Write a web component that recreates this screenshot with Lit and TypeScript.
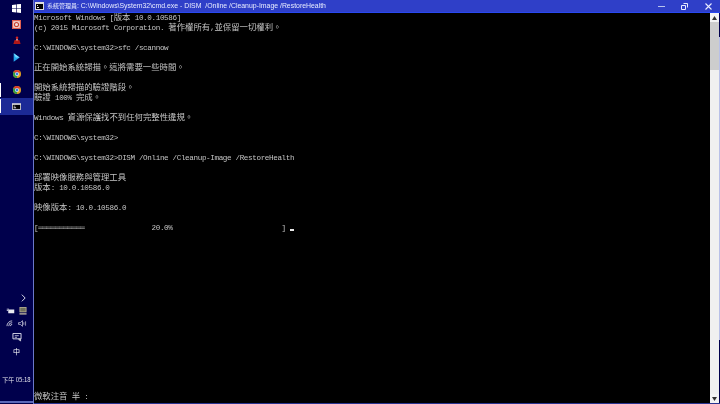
import { LitElement, html, css, svg } from "lit";
import { customElement } from "lit/decorators.js";

const P = "C:\\WINDOWS\\system32>";
const lines = [
  "Microsoft Windows [版本 10.0.10586]",
  "(c) 2015 Microsoft Corporation. 著作權所有,並保留一切權利。",
  "",
  P + "sfc /scannow",
  "",
  "正在開始系統掃描。這將需要一些時間。",
  "",
  "開始系統掃描的驗證階段。",
  "驗證 100% 完成。",
  "",
  "Windows 資源保護找不到任何完整性違規。",
  "",
  P,
  "",
  P + "DISM /Online /Cleanup-Image /RestoreHealth",
  "",
  "部署映像服務與管理工具",
  "版本: 10.0.10586.0",
  "",
  "映像版本: 10.0.10586.0",
  "",
];

/* Console cells: wide characters sit in a span that fills exactly two cells. */
const cells = (text: string) =>
  text.split(/([^\x00-\x7f]+)/).map((part, i) =>
    i % 2 ? html`<span class="cjk">${part}</span>` : part
  );

const chrome = (x: number, y: number) => svg`
  <g transform="translate(${x} ${y})">
    <circle cx="5" cy="5" r="5" fill="#e0a020"/>
    <path d="M5 5 L0.7 2.5 A5 5 0 0 1 9.3 2.5Z" fill="#d93a2b"/>
    <path d="M5 5 L0.7 2.5 A5 5 0 0 0 5 10Z" fill="#2f9e44"/>
    <circle cx="5" cy="5" r="2.4" fill="#fff"/>
    <circle cx="5" cy="5" r="1.8" fill="#3a7fe0"/>
  </g>`;

@customElement("app-root")
export class AppRoot extends LitElement {
  static styles = css`
    :host { display: block; width: 720px; height: 404px; overflow: hidden; background: #000; }
    .desk { display: flex; width: 720px; height: 404px; filter: blur(0.25px); }
    .bar { width: 33px; flex: none; background: #00004c; display: flex; flex-direction: column; align-items: stretch; }
    .edge { width: 1px; flex: none; background: #6a78c8; }
    .win { flex: 1; min-width: 0; display: flex; flex-direction: column; border-bottom: 1px solid #2a3590; }
    .title { height: 12px; flex: none; background: #2f3fc8; display: flex; align-items: center; color: #e8ecff; font: 6.9px/12px "Liberation Sans", "Noto Sans CJK TC", sans-serif; white-space: pre; padding-left: 1px; border-bottom: 1px solid #2848f0; }
    .title svg { flex: none; }
    .title .app { margin-right: 3px; }
    .title .t { flex: 1; }
    .title .zh { font: 6px/1px "Noto Sans CJK TC", sans-serif; }
    .ctl { display: flex; width: 70px; flex: none; }
    .ctl div { flex: 1; display: flex; justify-content: center; }
    .body { flex: 1; display: flex; min-height: 0; }
    .term { flex: 1; min-width: 0; color: #c4c4c4; font: 7.6px/10px "Liberation Mono", monospace; letter-spacing: -0.36px; white-space: pre; display: flex; flex-direction: column; overflow: hidden; }
    .ln { height: 10px; flex: none; }
    .last { height: 10px; flex: none; margin-bottom: 1px; }
    .cjk { font: 8.4px/1px "Noto Sans CJK TC", monospace; letter-spacing: 0; }
    .spacer { flex: 1; }
    .cursor { display: inline-block; width: 4px; height: 2px; background: #e8e8e8; vertical-align: -1px; }
    .sb { width: 9px; flex: none; background: #f0f0f0; display: flex; flex-direction: column; align-items: stretch; }
    .arrow { height: 9px; flex: none; display: flex; align-items: center; justify-content: center; background: #f4f4f4; }
    .thumb { height: 48px; background: #cdcdcd; flex: none; }
    .track { flex: 1; }
    .rb { width: 1px; flex: none; background: #00004c; display: flex; flex-direction: column; }
    .rb .lit { height: 303px; margin-top: 24px; background: #b8c0e8; }
    .ic { height: 16.4px; display: flex; align-items: center; justify-content: center; position: relative; }
    .top { display: flex; flex-direction: column; }
    .active { background: #1c2a96; }
    .mark { position: absolute; left: 0; top: 1px; width: 1px; height: 14px; background: #fff; }
    .tray { margin-top: auto; display: flex; flex-direction: column; align-items: center; color: #fff; padding-bottom: 1px; }
    .row { display: flex; align-items: center; justify-content: center; gap: 4px; height: 13px; width: 100%; }
    .tall { height: 14px; }
    .chev { justify-content: flex-end; padding-right: 7px; box-sizing: border-box; }
    .ime { font: 7px/14px "Noto Sans CJK TC", sans-serif; height: 14px; }
    .clock { font: 6px/8px "Noto Sans CJK TC", "Liberation Sans", sans-serif; white-space: nowrap; margin-top: 18px; margin-bottom: 17px; opacity: .9; }
    .foot { height: 2px; background: #5a68b8; width: 100%; }
  `;

  render() {
    return html`<div class="desk">
      <div class="bar">
        <div class="top">
          <div class="ic"><svg width="9" height="9" viewBox="0 0 10 10"><path d="M0 1.2 4.500.5V4.600H0ZM5.200.4 10 0V4.600H5.200ZM0 5.300H4.500V9.400L0 8.800ZM5.200 5.300H10V10L5.200 9.500Z" fill="#fff"/></svg></div>
          <div class="ic"><svg width="9" height="9" viewBox="0 0 11 11"><rect width="11" height="11" fill="#e06050"/><rect x="1.500" y="1.500" width="8" height="8" fill="#f4e0dc"/><circle cx="5.500" cy="5.500" r="2.500" fill="none" stroke="#c8402f" stroke-width="1.300"/></svg></div>
          <div class="ic"><svg width="8" height="9" viewBox="0 0 10 11"><circle cx="5" cy="2" r="1.600" fill="#d02020"/><path d="M2 5h6l1.500 5h-9Z" fill="#b01818"/><rect x="4" y="3.500" width="2" height="2" fill="#e8b0a0"/></svg></div>
          <div class="ic"><svg width="7" height="9" viewBox="0 0 10 12"><path d="M1 0 9.500 6 1 12Z" fill="#25a8ee"/><path d="M1 0 9.500 6H4Z" fill="#7adcff"/></svg></div>
          <div class="ic"><svg width="8" height="8" viewBox="0 0 10 10">${chrome(0, 0)}</svg></div>
          <div class="ic"><span class="mark"></span><svg width="8" height="8" viewBox="0 0 10 10">${chrome(0, 0)}</svg></div>
          <div class="ic active"><span class="mark"></span><svg width="9" height="7" viewBox="0 0 11 8"><rect width="11" height="8" fill="#ddd"/><rect x="1" y="2" width="9" height="5" fill="#000"/><path d="M2 3h2v1H2ZM2 5h3v1H2Z" fill="#ddd"/></svg></div>
        </div>
        <div class="tray">
          <div class="row chev"><svg width="5" height="8" viewBox="0 0 6 9"><path d="M1 .5 5 4.500 1 8.500" fill="none" stroke="#e8e8f4" stroke-width="1.100"/></svg></div>
          <div class="row">
            <svg width="9" height="6" viewBox="0 0 10 8"><rect x="2" y="2" width="8" height="5" fill="#e8e8f0"/><path d="M0 1h3v1H0ZM0 3h2v1H0Z" fill="#e8e8f0"/></svg>
            <svg width="8" height="8" viewBox="0 0 8 9"><rect width="8" height="6" fill="#b0a890"/><rect x="1" y="1" width="6" height="4" fill="#70705c"/><rect y="7" width="8" height="1.500" fill="#c0b8a0"/></svg>
          </div>
          <div class="row">
            <svg width="8" height="7" viewBox="0 0 9 8"><path d="M1 7A6 6 0 0 1 7 1M3 7A4 4 0 0 1 7 3M5 7A2 2 0 0 1 7 5" fill="none" stroke="#d0d0e0" stroke-width="1"/></svg>
            <svg width="9" height="7" viewBox="0 0 9 8"><path d="M0 3h2L4.500 .8V7.200L2 5H0Z" fill="none" stroke="#d8d8e8" stroke-width=".8"/><path d="M6 2.500V5.500M8 1.500V6.500" stroke="#c8c8d8" stroke-width=".8"/></svg>
          </div>
          <div class="row tall"><svg width="10" height="9" viewBox="0 0 10 10"><path d="M.5.5H9.500V6.500H.5Z" fill="none" stroke="#e8e8f4"/><path d="M2.500 3H7M2.500 4.800H5" stroke="#e8e8f4" stroke-width=".8"/><path d="M6 6 9.500 6V9.500L7 8Z" fill="#c0c0d0"/></svg></div>
          <div class="row ime">中</div>
          <div class="clock">下午 05:18</div>
          <div class="foot"></div>
        </div>
      </div>
      <div class="edge"></div>
      <div class="win">
        <div class="title">
          <svg class="app" width="9" height="8" viewBox="0 0 9 8"><rect width="9" height="8" fill="#ddd"/><rect x="1" y="2" width="7" height="5" fill="#000"/><path d="M2 3h1v1H2ZM2 5h2v1H2Z" fill="#ddd"/></svg>
          <span class="t"><span class="zh">系統管理員</span>: C:\\Windows\\System32\\cmd.exe - DISM  /Online /Cleanup-Image /RestoreHealth</span>
          <div class="ctl">
            <div><svg width="7" height="7" viewBox="0 0 7 7"><rect y="3" width="7" height="1" fill="#b8c4ee"/></svg></div>
            <div><svg width="7" height="7" viewBox="0 0 7 7"><path d="M2.500.5H6.500V4.500M.5 2.500H4.500V6.500H.5Z" fill="none" stroke="#e8ecff"/></svg></div>
            <div><svg width="7" height="7" viewBox="0 0 7 7"><path d="M.5.5 6.500 6.500M6.500.5 .5 6.500" stroke="#e8ecff" stroke-width="1.100"/></svg></div>
          </div>
        </div>
        <div class="body">
          <div class="term">
            ${lines.map((l) => html`<div class="ln">${cells(l)}</div>`)}
            <div class="ln">[═══════════                20.0%                          ] <span class="cursor"></span></div>
            <div class="spacer"></div>
            <div class="last">${cells("微軟注音 半 :")}</div>
          </div>
          <div class="sb">
            <div class="arrow"><svg width="5" height="4" viewBox="0 0 5 4"><path d="M0 4 2.500 0 5 4Z" fill="#333"/></svg></div>
            <div class="thumb"></div>
            <div class="track"></div>
            <div class="arrow"><svg width="5" height="4" viewBox="0 0 5 4"><path d="M0 0 2.500 4 5 0Z" fill="#333"/></svg></div>
          </div>
          <div class="rb"><div class="lit"></div></div>
        </div>
      </div>
    </div>`;
  }
}
